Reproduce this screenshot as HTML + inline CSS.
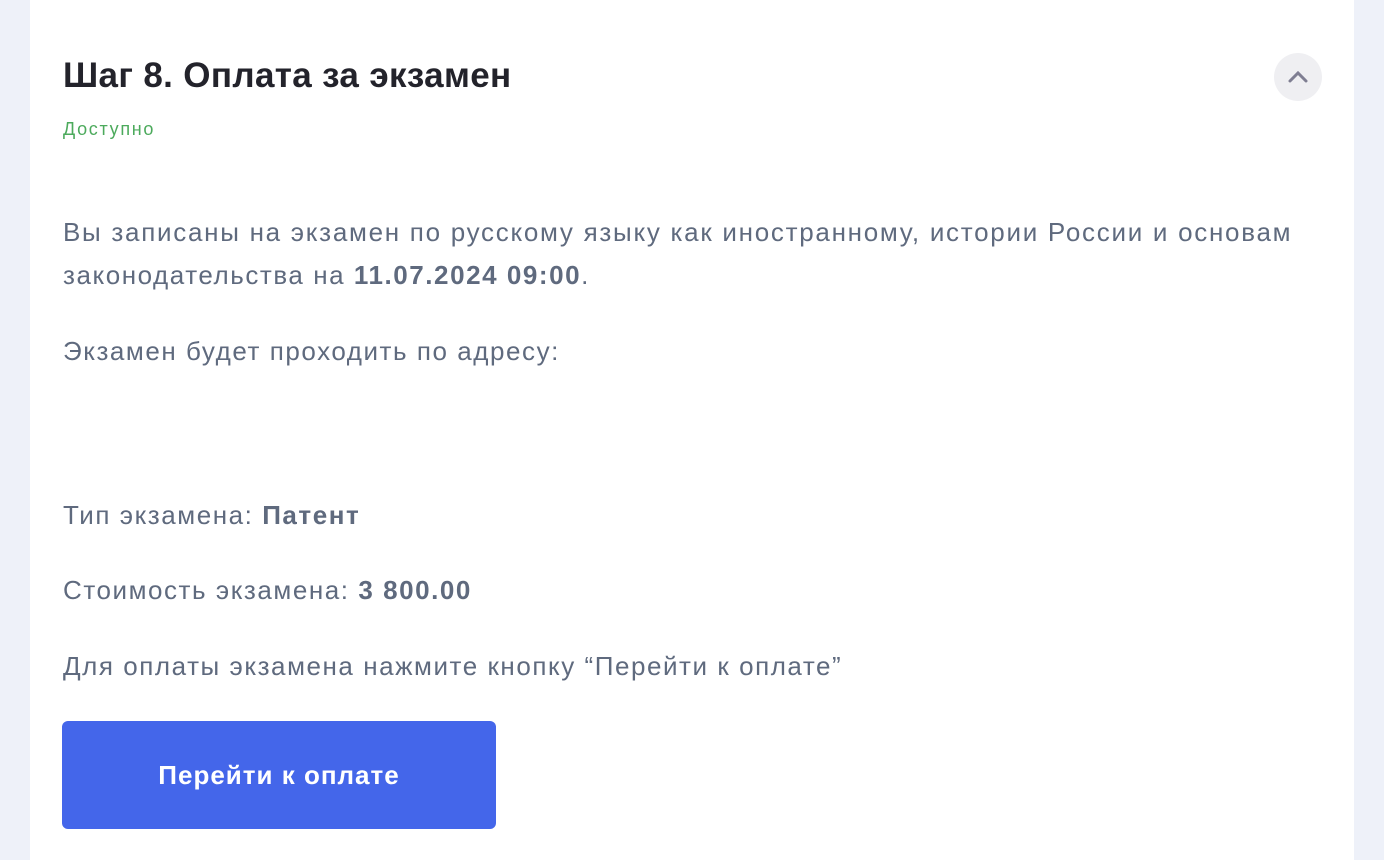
<!DOCTYPE html>
<html><head><meta charset="utf-8"><style>
body{margin:0;width:1384px;height:860px;background:#eef1f9;font-family:"Liberation Sans",sans-serif;overflow:hidden;position:relative}
.card{position:absolute;left:30px;top:0;width:1324px;height:860px;background:#fff}
.t{position:absolute;left:63px;color:#5f6a7e;font-size:26px;letter-spacing:1.55px;white-space:nowrap}
b{font-weight:bold}
</style></head><body>
<div class="card"></div>
<div style="position:absolute;left:63px;top:56px;font-size:35px;font-weight:bold;color:#23232b;letter-spacing:0.35px">Шаг 8. Оплата за экзамен</div>
<div style="position:absolute;left:63px;top:119px;font-size:18px;color:#4caa5c;letter-spacing:1.7px">Доступно</div>
<div style="position:absolute;left:1274px;top:53px;width:48px;height:48px;border-radius:50%;background:#efeff2"><svg width="48" height="48" viewBox="0 0 48 48"><path d="M16 28 L24 20 L32 28" fill="none" stroke="#7f7e92" stroke-width="3" stroke-linecap="round"/></svg></div>
<div class="t" style="top:211px;line-height:43px;letter-spacing:1.72px">Вы записаны на экзамен по русскому языку как иностранному, истории России и основам<br><span style="letter-spacing:1.55px">законодательства на <b>11.07.2024 09:00</b>.</span></div>
<div class="t" style="top:336px">Экзамен будет проходить по адресу:</div>
<div class="t" style="top:500px">Тип экзамена: <b>Патент</b></div>
<div class="t" style="top:575px">Стоимость экзамена: <b>3 800.00</b></div>
<div class="t" style="top:651px">Для оплаты экзамена нажмите кнопку “Перейти к оплате”</div>
<div style="position:absolute;left:62px;top:721px;width:434px;height:108px;background:#4466ea;border-radius:6px;color:#fff;font-size:26px;font-weight:bold;line-height:108px;text-align:center;letter-spacing:1px">Перейти к оплате</div>
</body></html>
